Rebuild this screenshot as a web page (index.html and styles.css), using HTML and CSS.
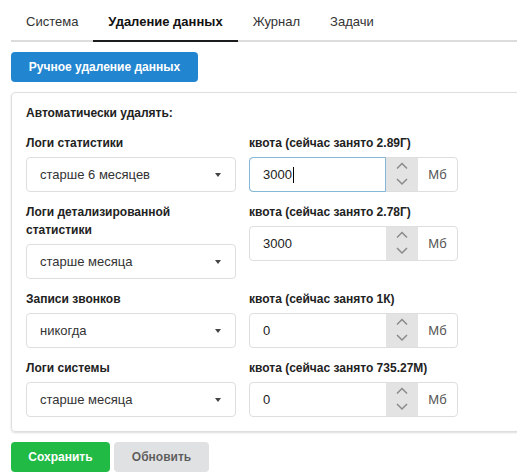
FILE: index.html
```html
<!DOCTYPE html>
<html lang="ru">
<head>
<meta charset="utf-8">
<title>Удаление данных</title>
<link rel="stylesheet" href="styles.css">
</head>
<body>
<div class="page">
  <div class="tabs">
    <div class="tab">Система</div>
    <div class="tab active">Удаление данных</div>
    <div class="tab">Журнал</div>
    <div class="tab">Задачи</div>
  </div>

  <button class="btn btn-blue">Ручное удаление данных</button>

  <div class="panel">
    <div class="panel-title">Автоматически удалять:</div>
    <div class="grid">
      <div class="field">
        <div class="label">Логи статистики</div>
        <div class="select"><span>старше 6 месяцев</span><i class="caret"></i></div>
      </div>
      <div class="field">
        <div class="label">квота (сейчас занято 2.89Г)</div>
        <div class="quota">
          <div class="q-input focused">3000<span class="cursor"></span></div>
          <div class="spin"><svg width="32" height="33" viewBox="0 0 32 33"><polyline points="11,10.5 16,5.5 21,10.5"/><polyline points="11,21 16,26 21,21"/></svg></div>
          <div class="unit">Мб</div>
        </div>
      </div>

      <div class="field">
        <div class="label">Логи детализированной статистики</div>
        <div class="select"><span>старше месяца</span><i class="caret"></i></div>
      </div>
      <div class="field">
        <div class="label">квота (сейчас занято 2.78Г)</div>
        <div class="quota">
          <div class="q-input">3000</div>
          <div class="spin"><svg width="32" height="33" viewBox="0 0 32 33"><polyline points="11,10.5 16,5.5 21,10.5"/><polyline points="11,21 16,26 21,21"/></svg></div>
          <div class="unit">Мб</div>
        </div>
      </div>

      <div class="field">
        <div class="label">Записи звонков</div>
        <div class="select"><span>никогда</span><i class="caret"></i></div>
      </div>
      <div class="field">
        <div class="label">квота (сейчас занято 1К)</div>
        <div class="quota">
          <div class="q-input">0</div>
          <div class="spin"><svg width="32" height="33" viewBox="0 0 32 33"><polyline points="11,10.5 16,5.5 21,10.5"/><polyline points="11,21 16,26 21,21"/></svg></div>
          <div class="unit">Мб</div>
        </div>
      </div>

      <div class="field">
        <div class="label">Логи системы</div>
        <div class="select"><span>старше месяца</span><i class="caret"></i></div>
      </div>
      <div class="field">
        <div class="label">квота (сейчас занято 735.27M)</div>
        <div class="quota">
          <div class="q-input">0</div>
          <div class="spin"><svg width="32" height="33" viewBox="0 0 32 33"><polyline points="11,10.5 16,5.5 21,10.5"/><polyline points="11,21 16,26 21,21"/></svg></div>
          <div class="unit">Мб</div>
        </div>
      </div>
    </div>
  </div>

  <div class="actions">
    <button class="btn btn-green">Сохранить</button>
    <button class="btn btn-grey">Обновить</button>
  </div>
</div>
</body>
</html>
```

FILE: styles.css
```css
html, body {
  margin: 0;
  padding: 0;
  overflow: hidden;
  background: #fff;
}

body {
  font-family: "Liberation Sans", Arial, sans-serif;
  font-size: 13px;
  color: #222;
}

.page {
  padding: 0 0 0 11px;
  margin-right: -3px;
}

.tabs {
  display: flex;
  border-bottom: 2px solid #dcdcdc;
  height: 40px;
}

.tab {
  padding: 4px 15px 0;
  line-height: 36px;
  color: #333;
  border-bottom: 2px solid transparent;
  margin-bottom: -2px;
}

.tab.active {
  font-weight: bold;
  color: #111;
  border-bottom-color: #1b1c1d;
}

.btn {
  display: inline-block;
  border: none;
  font-family: "Liberation Sans", Arial, sans-serif;
  font-size: 12px;
  font-weight: bold;
  height: 30px;
  padding: 0;
  border-radius: 4px;
  cursor: pointer;
  white-space: nowrap;
}

.btn-blue {
  margin-top: 10px;
  background: #2185d0;
  color: #fff;
  width: 187px;
  display: block;
}

.btn-green {
  background: #21ba45;
  color: #fff;
  width: 99px;
}

.btn-grey {
  background: #e0e1e2;
  color: rgba(0, 0, 0, 0.6);
  width: 95px;
}

.panel {
  margin-top: 10px;
  border: 1px solid #dedede;
  border-radius: 4px;
  box-shadow: 0 1px 2px 0 rgba(34, 36, 38, 0.15);
  padding: 11px 14px 14px;
}

.panel-title {
  font-weight: bold;
  font-size: 12px;
  line-height: 18px;
  margin-bottom: 12px;
}

.grid {
  display: grid;
  grid-template-columns: 210px 209px;
  column-gap: 13px;
  row-gap: 11px;
  align-items: start;
}

.label {
  font-weight: bold;
  font-size: 12px;
  line-height: 18px;
  margin-bottom: 5px;
}

.select {
  box-sizing: border-box;
  height: 35px;
  border: 1px solid #dedede;
  border-radius: 4px;
  display: flex;
  align-items: center;
  justify-content: space-between;
  padding: 0 14px 0 13px;
  color: #333;
}

.caret {
  width: 0;
  height: 0;
  border-left: 3.5px solid transparent;
  border-right: 3.5px solid transparent;
  border-top: 4px solid #444;
}

.quota {
  box-sizing: border-box;
  height: 35px;
  border: 1px solid #dedede;
  border-radius: 4px;
  display: flex;
}

.q-input {
  box-sizing: border-box;
  width: 137px;
  margin: -1px 0 -1px -1px;
  border: 1px solid transparent;
  border-radius: 4px 0 0 4px;
  padding: 0 13px;
  display: flex;
  align-items: center;
  color: #222;
}

.q-input.focused {
  border-color: #85b7d9;
}

.cursor {
  display: inline-block;
  width: 1px;
  height: 16px;
  background: #000;
  margin-left: 1px;
}

.spin {
  width: 32px;
  background: #e3e3e3;
  display: flex;
}

.spin svg {
  fill: none;
  stroke: #8a8a8a;
  stroke-width: 1.5;
}

.unit {
  flex: 1;
  display: flex;
  align-items: center;
  justify-content: center;
  color: #555;
}

.actions {
  display: flex;
  gap: 4px;
  margin-top: 10px;
}
```
